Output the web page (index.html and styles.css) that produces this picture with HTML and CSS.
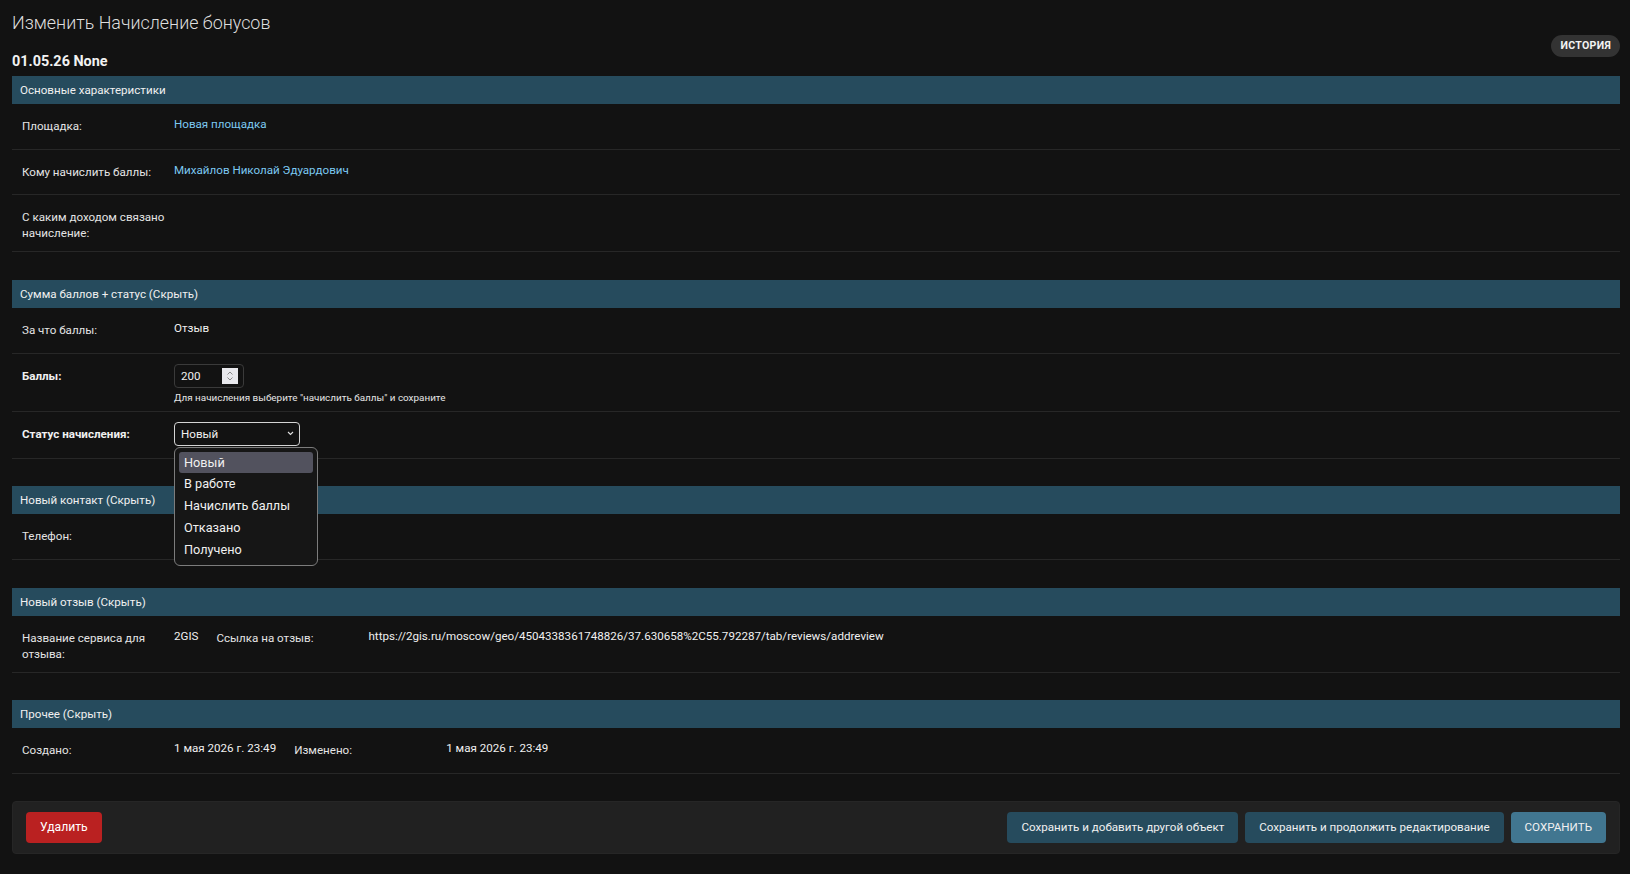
FILE: index.html
```html
<!DOCTYPE html>
<html lang="ru">
<head>
<meta charset="utf-8">
<title>Изменить Начисление бонусов</title>
<link rel="stylesheet" href="styles.css">
</head>
<body>
<div class="page">
  <div class="head">
    <div class="titles">
      <h1 class="title">Изменить Начисление бонусов</h1>
      <h2 class="obj">01.05.26 None</h2>
    </div>
    <a class="history" href="#">История</a>
  </div>

  <fieldset class="module">
    <h2 class="bar">Основные характеристики</h2>
    <div class="row">
      <div class="field"><div class="label">Площадка:</div><div class="value"><a class="link" href="#">Новая площадка</a></div></div>
    </div>
    <div class="row">
      <div class="field"><div class="label">Кому начислить баллы:</div><div class="value"><a class="link" href="#">Михайлов Николай Эдуардович</a></div></div>
    </div>
    <div class="row">
      <div class="field"><div class="label">С каким доходом связано начисление:</div><div class="value"></div></div>
    </div>
  </fieldset>

  <fieldset class="module">
    <h2 class="bar">Сумма баллов + статус (Скрыть)</h2>
    <div class="row">
      <div class="field"><div class="label">За что баллы:</div><div class="value">Отзыв</div></div>
    </div>
    <div class="row row-help">
      <div class="field">
        <div class="label strong">Баллы:</div>
        <div class="value input-col">
          <div class="num-input">
            <span class="num-text">200</span>
            <span class="spin"><svg width="16" height="16" viewBox="0 0 16 16"><path d="M5.5 6.5 L8 4 L10.5 6.5" fill="none" stroke="#8a8a8a" stroke-width="1"/><path d="M5.5 9.5 L8 12 L10.5 9.5" fill="none" stroke="#8a8a8a" stroke-width="1"/></svg></span>
          </div>
          <p class="help">Для начисления выберите "начислить баллы" и сохраните</p>
        </div>
      </div>
    </div>
    <div class="row">
      <div class="field">
        <div class="label strong">Статус начисления:</div>
        <div class="value select-col">
          <div class="select-wrap">
            <div class="select">
              <span>Новый</span>
              <svg class="chev" width="7" height="5" viewBox="0 0 7 5"><path d="M1 1 L3.5 3.5 L6 1" fill="none" stroke="#e0e0e0" stroke-width="1.1"/></svg>
            </div>
            <ul class="dropdown">
              <li class="opt active">Новый</li>
              <li class="opt">В работе</li>
              <li class="opt">Начислить баллы</li>
              <li class="opt">Отказано</li>
              <li class="opt">Получено</li>
            </ul>
          </div>
        </div>
      </div>
    </div>
  </fieldset>

  <fieldset class="module">
    <h2 class="bar">Новый контакт (Скрыть)</h2>
    <div class="row">
      <div class="field"><div class="label">Телефон:</div><div class="value"></div></div>
    </div>
  </fieldset>

  <fieldset class="module">
    <h2 class="bar">Новый отзыв (Скрыть)</h2>
    <div class="row">
      <div class="field"><div class="label">Название сервиса для отзыва:</div><div class="value">2GIS</div></div>
      <div class="field"><div class="label">Ссылка на отзыв:</div><div class="value">https://2gis.ru/moscow/geo/4504338361748826/37.630658%2C55.792287/tab/reviews/addreview</div></div>
    </div>
  </fieldset>

  <fieldset class="module">
    <h2 class="bar">Прочее (Скрыть)</h2>
    <div class="row">
      <div class="field"><div class="label">Создано:</div><div class="value">1 мая 2026 г. 23:49</div></div>
      <div class="field"><div class="label">Изменено:</div><div class="value">1 мая 2026 г. 23:49</div></div>
    </div>
  </fieldset>

  <div class="submit-row">
    <a class="btn delete" href="#">Удалить</a>
    <div class="save-group">
      <button class="btn">Сохранить и добавить другой объект</button>
      <button class="btn">Сохранить и продолжить редактирование</button>
      <button class="btn default">СОХРАНИТЬ</button>
    </div>
  </div>
</div>
</body>
</html>
```

FILE: styles.css
```css
* { box-sizing: border-box; }

body {
  margin: 0;
  background: #121212;
  color: #eeeeee;
  font-family: Roboto, "Noto Sans", "Liberation Sans", sans-serif;
  font-size: 11.6px;
}

.page {
  padding: 11px 10px 18px 12px;
}

.head {
  display: flex;
  justify-content: space-between;
  align-items: flex-start;
}

.title {
  margin: 0;
  font-size: 17.9px;
  line-height: 24px;
  font-weight: 300;
  color: #dedede;
}

.obj {
  margin: 18px 0 5px;
  font-size: 14.4px;
  line-height: 18px;
  font-weight: 700;
  color: #f2f2f2;
}

.history {
  margin-top: 24px;
  height: 22px;
  padding: 0 9px;
  border-radius: 11px;
  background: #333333;
  color: #f2f2f2;
  font-size: 10.6px;
  font-weight: 700;
  line-height: 22px;
  text-transform: uppercase;
  letter-spacing: 0.3px;
  text-decoration: none;
}

.module {
  margin: 0 0 27.6px;
  padding: 0;
  border: 0;
  min-width: 0;
}

.bar {
  margin: 0;
  height: 28px;
  padding: 0 8px;
  line-height: 28px;
  background: #264b5d;
  color: #f0f0f0;
  font-size: 11.6px;
  font-weight: 400;
}

.row {
  display: flex;
  padding: 10px 10px;
  border-bottom: 1px solid #272727;
}

.row-help {
  padding-bottom: 8px;
}

.field {
  display: flex;
  margin-right: 18px;
}

.label {
  flex: none;
  width: 152px;
  padding: 4px 4px 0 0;
  line-height: 16px;
  color: #e4e4e4;
}

.label.strong {
  font-weight: 700;
  color: #f0f0f0;
}

.value {
  min-height: 24.7px;
  padding-top: 2px;
  line-height: 16px;
  color: #f0f0f0;
}

.link {
  color: #7cc8f0;
  text-decoration: none;
}

.input-col {
  padding-top: 0;
}

.num-input {
  display: flex;
  align-items: center;
  justify-content: space-between;
  width: 70px;
  height: 24px;
  padding: 0 5px 0 6px;
  border: 1px solid #3a3a3a;
  border-radius: 4px;
  background: #121212;
}

.num-text {
  line-height: 16px;
}

.spin {
  display: flex;
  width: 16px;
  height: 16px;
  background: #e9e9ed;
}

.help {
  margin: 4px 0 0;
  font-size: 9.9px;
  line-height: 11px;
  color: #e6e6e6;
}

.select-col {
  padding-top: 0;
  min-height: 26px;
}

.select-wrap {
  position: relative;
}

.select {
  display: flex;
  align-items: center;
  justify-content: space-between;
  width: 126px;
  height: 24px;
  padding: 0 5px 0 6px;
  border: 1px solid #d4d4d4;
  border-radius: 4px;
  background: #121212;
}

.chev {
  display: block;
}

.dropdown {
  position: absolute;
  left: 0;
  top: 25px;
  z-index: 5;
  width: 144px;
  margin: 0;
  padding: 4px;
  list-style: none;
  border: 1px solid #7c7c7c;
  border-radius: 6px;
  background: #161616;
}

.opt {
  height: 21.8px;
  padding: 0 5px;
  line-height: 21.8px;
  font-size: 12.7px;
  color: #f0f0f0;
  border-radius: 3px;
}

.opt.active {
  background: #52525e;
}

.submit-row {
  display: flex;
  align-items: center;
  padding: 10px 13px;
  border: 1px solid #262626;
  border-radius: 4px;
  background: #212121;
}

.save-group {
  display: flex;
  gap: 7px;
  margin-left: auto;
}

.btn {
  display: inline-block;
  height: 31px;
  padding: 0 14px;
  border: 0;
  border-radius: 4px;
  background: #264b5d;
  color: #f0f0f0;
  font-family: Roboto, "Noto Sans", "Liberation Sans", sans-serif;
  font-size: 11.6px;
  line-height: 31px;
  text-decoration: none;
}

.btn.delete {
  background: #ba2121;
  color: #ffffff;
  font-size: 12.2px;
}

.btn.default {
  background: #417690;
}
```
